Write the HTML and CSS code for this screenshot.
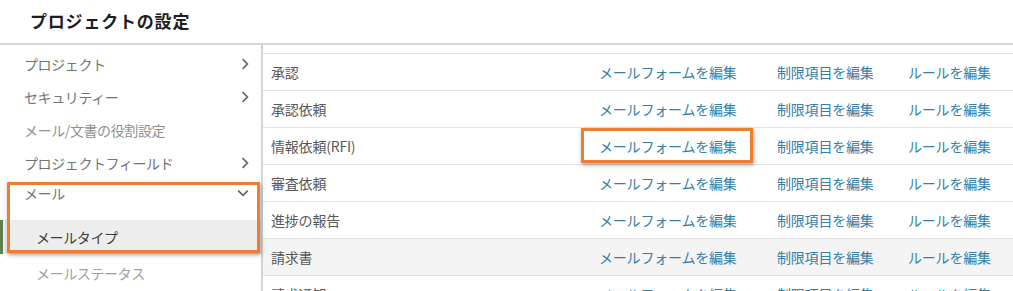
FILE: index.html
```html
<!DOCTYPE html>
<html>
  <head>
    <title>プロジェクトの設定</title>
    <link rel="stylesheet" href="styles.css">
  </head>

  <body>
    <header class="page-header">
      <h1>プロジェクトの設定</h1>
    </header>

    <div class="layout">
      <!-- Left navigation -->
      <nav class="sidebar">
        <div class="nav-item">
          <span>プロジェクト</span>
          <svg class="chevron" viewBox="0 0 10 10"><path d="M3 1 L7 5 L3 9" /></svg>
        </div>
        <div class="nav-item">
          <span>セキュリティー</span>
          <svg class="chevron" viewBox="0 0 10 10"><path d="M3 1 L7 5 L3 9" /></svg>
        </div>
        <div class="nav-item muted">
          <span>メール/文書の役割設定</span>
        </div>
        <div class="nav-item">
          <span>プロジェクトフィールド</span>
          <svg class="chevron" viewBox="0 0 10 10"><path d="M3 1 L7 5 L3 9" /></svg>
        </div>

        <!-- highlighted group -->
        <div class="nav-group highlight">
          <div class="nav-item open">
            <span>メール</span>
            <svg class="chevron down" viewBox="0 0 10 10"><path d="M1 3 L5 7 L9 3" /></svg>
          </div>
          <div class="sub-item active">メールタイプ</div>
        </div>
        <div class="sub-item faded">メールステータス</div>
      </nav>

      <!-- Mail type list -->
      <main class="content">
        <div class="list">
          <div class="list-head"></div>

          <div class="row">
            <div class="label">承認</div>
            <a class="link">メールフォームを編集</a>
            <a class="link">制限項目を編集</a>
            <a class="link">ルールを編集</a>
          </div>
          <div class="row">
            <div class="label">承認依頼</div>
            <a class="link">メールフォームを編集</a>
            <a class="link">制限項目を編集</a>
            <a class="link">ルールを編集</a>
          </div>
          <div class="row">
            <div class="label">情報依頼(RFI)</div>
            <a class="link"><span class="boxed">メールフォームを編集</span></a>
            <a class="link">制限項目を編集</a>
            <a class="link">ルールを編集</a>
          </div>
          <div class="row">
            <div class="label">審査依頼</div>
            <a class="link">メールフォームを編集</a>
            <a class="link">制限項目を編集</a>
            <a class="link">ルールを編集</a>
          </div>
          <div class="row">
            <div class="label">進捗の報告</div>
            <a class="link">メールフォームを編集</a>
            <a class="link">制限項目を編集</a>
            <a class="link">ルールを編集</a>
          </div>
          <div class="row shaded">
            <div class="label">請求書</div>
            <a class="link">メールフォームを編集</a>
            <a class="link">制限項目を編集</a>
            <a class="link">ルールを編集</a>
          </div>
          <div class="row">
            <div class="label">請求通知</div>
            <a class="link">メールフォームを編集</a>
            <a class="link">制限項目を編集</a>
            <a class="link">ルールを編集</a>
          </div>
        </div>
      </main>
    </div>
  </body>
</html>
```

FILE: styles.css
```css
body {
  margin: 0;
  font-family: "Noto Sans CJK JP", "Noto Sans", sans-serif;
  background: #fff;
  overflow: hidden;
  height: 291px;
}

.page-header {
  height: 41px;
  padding-bottom: 2px;
  border-bottom: 2px solid #d6d6d6;
  display: flex;
  align-items: center;
  padding-left: 30px;
}

h1 {
  margin: 0;
  font-size: 17px;
  font-weight: bold;
  letter-spacing: 0.8px;
  color: #1e1e1e;
}

.layout {
  display: flex;
}

/* Sidebar */
.sidebar {
  width: 261px;
  flex-shrink: 0;
  border-right: 2px solid #d4d4d4;
  padding-top: 2px;
  height: 260px;
}

.nav-item {
  height: 33px;
  display: flex;
  align-items: center;
  justify-content: space-between;
  padding: 0 10px 0 24px;
  font-size: 14px;
  letter-spacing: -0.4px;
  color: #737373;
}

.nav-item.muted {
  color: #8f8f8f;
}

.nav-item.open {
  height: 41px;
  align-items: flex-start;
  padding-top: 4px;
  box-sizing: border-box;
}

.chevron {
  width: 12px;
  height: 12px;
  fill: none;
  stroke: #666;
  stroke-width: 1.4;
}

.chevron.down {
  margin-top: 4px;
  margin-right: 2px;
}

.sub-item {
  height: 34px;
  display: flex;
  align-items: center;
  padding-left: 36px;
  font-size: 14px;
  letter-spacing: -0.4px;
  color: #555;
}

.sub-item.active {
  background: #ededed;
  border-left: 3px solid #5f7f4c;
  padding-left: 33px;
  color: #3c3c3c;
}

.sub-item.faded {
  color: #a0a0a0;
  padding-top: 2px;
}

/* orange annotation boxes */
.nav-group {
  position: relative;
}

.highlight::after {
  content: "";
  position: absolute;
  left: 7px;
  right: 1px;
  top: 3px;
  bottom: 1px;
  border: 3px solid #ed7d31;
  box-shadow: 1px 2px 4px rgba(0, 0, 0, 0.35);
}

.boxed {
  position: relative;
}

.boxed::after {
  content: "";
  position: absolute;
  left: -18px;
  right: -16px;
  top: -8px;
  bottom: -7px;
  border: 3px solid #ed7d31;
  box-shadow: 1px 2px 4px rgba(0, 0, 0, 0.35);
}

/* Content list */
.content {
  flex: 1;
}

.list-head {
  height: 8px;
  border-bottom: 1px solid #e2e2e2;
}

.row {
  display: grid;
  grid-template-columns: 1fr 178px 131px 105px;
  align-items: center;
  height: 36px;
  border-bottom: 1px solid #e2e2e2;
  font-size: 14px;
  letter-spacing: -0.2px;
}

.row.shaded {
  background: #f4f4f4;
}

.label {
  padding-left: 8px;
  color: #585858;
}

.link {
  color: #3580a8;
  text-decoration: none;
  cursor: pointer;
  white-space: nowrap;
}
```
